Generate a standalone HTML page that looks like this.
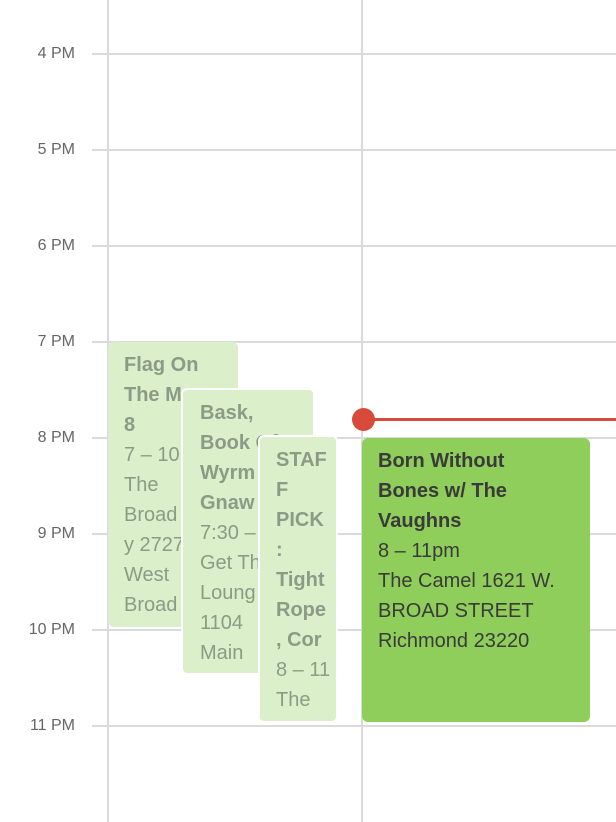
<!DOCTYPE html>
<html><head><style>
body{margin:0;width:616px;height:822px;position:relative;overflow:hidden;background:#fff;font-family:"Liberation Sans",Roboto,sans-serif}
.h{position:absolute;left:92px;right:0;height:2px;background:#dadadd}
.v{position:absolute;top:0;bottom:0;width:2px;background:#dadadd}
.l{position:absolute;right:541px;font-size:16px;color:#666;line-height:20px;white-space:nowrap}
.e{position:absolute;border-radius:6px;overflow:hidden;font-size:20px;line-height:30px;padding:8px 0 0 16px;box-sizing:border-box}
.f{background:#dcefcb;color:#8c9b86;border:2px solid #fff}
.e b{font-weight:bold}
</style></head><body>
<div class="v" style="left:107px"></div>
<div class="v" style="left:361px"></div>
<div class="h" style="top:53px"></div><div class="l" style="top:44px">4 PM</div>
<div class="h" style="top:149px"></div><div class="l" style="top:140px">5 PM</div>
<div class="h" style="top:245px"></div><div class="l" style="top:236px">6 PM</div>
<div class="h" style="top:341px"></div><div class="l" style="top:332px">7 PM</div>
<div class="h" style="top:437px"></div><div class="l" style="top:428px">8 PM</div>
<div class="h" style="top:533px"></div><div class="l" style="top:524px">9 PM</div>
<div class="h" style="top:629px"></div><div class="l" style="top:620px">10 PM</div>
<div class="h" style="top:725px"></div><div class="l" style="top:716px">11 PM</div>

<div class="e f" style="left:108px;top:342px;width:130px;height:285px;border:none;padding-left:16px;padding-top:8px"><b>Flag On<br>The Mo<br>8</b><br>7 – 10<br>The<br>Broad<br>y 2727<br>West<br>Broad</div>
<div class="e f" style="left:181px;top:388px;width:134px;height:287px;padding-left:17px"><b>Bask,<br>Book Of<br>Wyrm<br>Gnaw</b><br>7:30 –<br>Get Th<br>Loung<br>1104<br>Main</div>
<div class="e f" style="left:258px;top:435px;width:80px;height:288px;padding-left:16px"><b>STAF<br>F<br>PICK<br>:<br>Tight<br>Rope<br>, Cor</b><br>8 – 11<br>The</div>
<div class="e" style="left:362px;top:438px;width:228px;height:284px;background:#8fce5a;color:#3a3a3a"><b>Born Without<br>Bones w/ The<br>Vaughns</b><br>8 – 11pm<br>The Camel 1621 W.<br>BROAD STREET<br>Richmond 23220</div>

<div style="position:absolute;left:363px;right:0;top:418px;height:3px;background:#d84b3b"></div>
<div style="position:absolute;left:352px;top:408px;width:23px;height:23px;border-radius:50%;background:#d84b3b"></div>
</body></html>
